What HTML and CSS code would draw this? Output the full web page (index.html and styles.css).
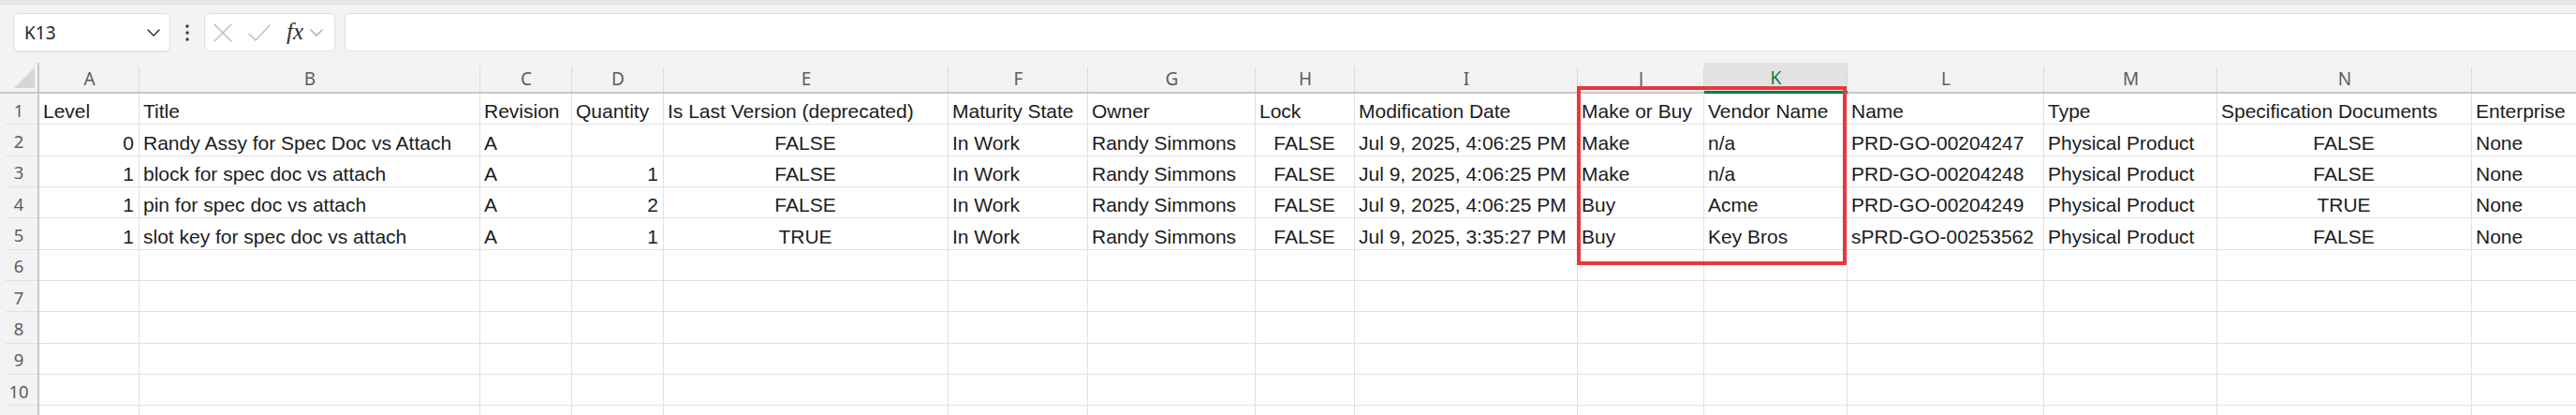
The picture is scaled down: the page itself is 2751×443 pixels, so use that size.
FILE: index.html
```html
<!DOCTYPE html>
<html lang="en">
<head>
<meta charset="utf-8">
<title>Sheet</title>
<link rel="stylesheet" href="styles.css">
</head>
<body>
<div class="ribbon-edge"></div>
<div class="toolbar">
  <div class="namebox">
    <span class="ref">K13</span>
    <svg class="chev" width="16" height="10" viewBox="0 0 16 10"><polyline points="2,2 8,8 14,2" fill="none" stroke="#3a3a3a" stroke-width="1.6" stroke-linecap="round" stroke-linejoin="round"/></svg>
  </div>
  <div class="dots">
    <svg width="6" height="20" viewBox="0 0 6 20"><circle cx="3" cy="3" r="1.7" fill="#3a3a3a"/><circle cx="3" cy="10" r="1.7" fill="#3a3a3a"/><circle cx="3" cy="17" r="1.7" fill="#3a3a3a"/></svg>
  </div>
  <div class="fxbox">
    <svg class="ic-x" width="20" height="20" viewBox="0 0 20 20"><path d="M1 1 L19 19 M19 1 L1 19" stroke="#c2c2c2" stroke-width="1.6" fill="none" stroke-linecap="round"/></svg>
    <svg class="ic-ok" width="24" height="20" viewBox="0 0 24 20"><polyline points="1,11 8,18 23,2" fill="none" stroke="#c2c2c2" stroke-width="1.6" stroke-linecap="round" stroke-linejoin="round"/></svg>
    <span class="fx">fx</span>
    <svg class="chev-sm" width="16" height="10" viewBox="0 0 16 10"><polyline points="2,2 8,8 14,2" fill="none" stroke="#a8a8a8" stroke-width="1.4" stroke-linecap="round" stroke-linejoin="round"/></svg>
  </div>
  <div class="formula"></div>
</div>

<div class="viewport">
<div class="sheet">
  <div class="corner"><svg width="22" height="22" viewBox="0 0 22 22"><polygon points="22,0 22,22 0,22" fill="#d6d6d6"/></svg></div>
  <div class="ch">A</div><div class="ch">B</div><div class="ch">C</div><div class="ch">D</div><div class="ch">E</div><div class="ch">F</div><div class="ch">G</div><div class="ch">H</div><div class="ch">I</div><div class="ch">J</div><div class="ch sel">K</div><div class="ch">L</div><div class="ch">M</div><div class="ch">N</div><div class="ch"></div>

  <div class="rh">1</div>
  <div class="c">Level</div><div class="c">Title</div><div class="c">Revision</div><div class="c">Quantity</div><div class="c">Is Last Version (deprecated)</div><div class="c">Maturity State</div><div class="c">Owner</div><div class="c">Lock</div><div class="c">Modification Date</div><div class="c">Make or Buy</div><div class="c">Vendor Name</div><div class="c">Name</div><div class="c">Type</div><div class="c">Specification Documents</div><div class="c">Enterprise</div>

  <div class="rh">2</div>
  <div class="c r">0</div><div class="c">Randy Assy for Spec Doc vs Attach</div><div class="c">A</div><div class="c r"></div><div class="c m">FALSE</div><div class="c">In Work</div><div class="c">Randy Simmons</div><div class="c m">FALSE</div><div class="c">Jul 9, 2025, 4:06:25 PM</div><div class="c">Make</div><div class="c">n/a</div><div class="c">PRD-GO-00204247</div><div class="c">Physical Product</div><div class="c m">FALSE</div><div class="c">None</div>

  <div class="rh">3</div>
  <div class="c r">1</div><div class="c">block for spec doc vs attach</div><div class="c">A</div><div class="c r">1</div><div class="c m">FALSE</div><div class="c">In Work</div><div class="c">Randy Simmons</div><div class="c m">FALSE</div><div class="c">Jul 9, 2025, 4:06:25 PM</div><div class="c">Make</div><div class="c">n/a</div><div class="c">PRD-GO-00204248</div><div class="c">Physical Product</div><div class="c m">FALSE</div><div class="c">None</div>

  <div class="rh">4</div>
  <div class="c r">1</div><div class="c">pin for spec doc vs attach</div><div class="c">A</div><div class="c r">2</div><div class="c m">FALSE</div><div class="c">In Work</div><div class="c">Randy Simmons</div><div class="c m">FALSE</div><div class="c">Jul 9, 2025, 4:06:25 PM</div><div class="c">Buy</div><div class="c">Acme</div><div class="c">PRD-GO-00204249</div><div class="c">Physical Product</div><div class="c m">TRUE</div><div class="c">None</div>

  <div class="rh">5</div>
  <div class="c r">1</div><div class="c">slot key for spec doc vs attach</div><div class="c">A</div><div class="c r">1</div><div class="c m">TRUE</div><div class="c">In Work</div><div class="c">Randy Simmons</div><div class="c m">FALSE</div><div class="c">Jul 9, 2025, 3:35:27 PM</div><div class="c">Buy</div><div class="c">Key Bros</div><div class="c">sPRD-GO-00253562</div><div class="c">Physical Product</div><div class="c m">FALSE</div><div class="c">None</div>

  <div class="rh">6</div>
  <div class="c"></div><div class="c"></div><div class="c"></div><div class="c"></div><div class="c"></div><div class="c"></div><div class="c"></div><div class="c"></div><div class="c"></div><div class="c"></div><div class="c"></div><div class="c"></div><div class="c"></div><div class="c"></div><div class="c"></div>

  <div class="rh">7</div>
  <div class="c"></div><div class="c"></div><div class="c"></div><div class="c"></div><div class="c"></div><div class="c"></div><div class="c"></div><div class="c"></div><div class="c"></div><div class="c"></div><div class="c"></div><div class="c"></div><div class="c"></div><div class="c"></div><div class="c"></div>

  <div class="rh">8</div>
  <div class="c"></div><div class="c"></div><div class="c"></div><div class="c"></div><div class="c"></div><div class="c"></div><div class="c"></div><div class="c"></div><div class="c"></div><div class="c"></div><div class="c"></div><div class="c"></div><div class="c"></div><div class="c"></div><div class="c"></div>

  <div class="rh">9</div>
  <div class="c"></div><div class="c"></div><div class="c"></div><div class="c"></div><div class="c"></div><div class="c"></div><div class="c"></div><div class="c"></div><div class="c"></div><div class="c"></div><div class="c"></div><div class="c"></div><div class="c"></div><div class="c"></div><div class="c"></div>

  <div class="rh">10</div>
  <div class="c"></div><div class="c"></div><div class="c"></div><div class="c"></div><div class="c"></div><div class="c"></div><div class="c"></div><div class="c"></div><div class="c"></div><div class="c"></div><div class="c"></div><div class="c"></div><div class="c"></div><div class="c"></div><div class="c"></div>

  <div class="rh"></div>
  <div class="c"></div><div class="c"></div><div class="c"></div><div class="c"></div><div class="c"></div><div class="c"></div><div class="c"></div><div class="c"></div><div class="c"></div><div class="c"></div><div class="c"></div><div class="c"></div><div class="c"></div><div class="c"></div><div class="c"></div>

  <div class="highlight"></div>
</div>
</div>
</body>
</html>
```

FILE: styles.css
```css
html, body {
  margin: 0;
  padding: 0;
}
body {
  width: 2751px;
  height: 443px;
  overflow: hidden;
  background: #f3f3f3;
  font-family: "Liberation Sans", Arial, sans-serif;
}

.ribbon-edge {
  height: 4px;
  background: #e8e8e8;
  border-bottom: 1px solid #dddddd;
}

.toolbar {
  display: flex;
  align-items: stretch;
  height: 41px;
  padding: 9px 0 12px 14px;
  overflow: hidden;
}

.namebox {
  width: 168px;
  flex: none;
  box-sizing: border-box;
  background: #ffffff;
  border: 1px solid #e0e0e0;
  border-radius: 6px;
  box-shadow: 0 1px 1px rgba(0,0,0,0.04);
  display: flex;
  align-items: center;
  padding: 0 9px 0 11px;
}
.ref {
  flex: 1;
  font-family: "Noto Sans", "Liberation Sans", sans-serif;
  font-size: 19px;
  color: #242424;
}
.chev {
  display: block;
}

.dots {
  width: 36px;
  flex: none;
  display: flex;
  align-items: center;
  justify-content: center;
}
.dots svg { display: block; }

.fxbox {
  width: 140px;
  flex: none;
  box-sizing: border-box;
  background: #ffffff;
  border: 1px solid #e0e0e0;
  border-radius: 6px;
  display: flex;
  align-items: center;
  padding: 0 0 0 9px;
}
.ic-x { display: block; margin-right: 17px; }
.ic-ok { display: block; margin-right: 17px; }
.fx {
  font-family: "Liberation Serif", "DejaVu Serif", serif;
  font-style: italic;
  font-size: 25px;
  color: #303030;
  margin-right: 6px;
  line-height: 1;
  position: relative;
  top: -1px;
}
.chev-sm { display: block; }

.formula {
  flex: 1;
  margin-left: 10px;
  margin-right: -8px;
  background: #ffffff;
  border: 1px solid #e0e0e0;
  border-radius: 6px;
}

.viewport {
  width: 2751px;
  height: 376px;
  overflow: hidden;
}

.sheet {
  position: relative;
  display: grid;
  grid-template-columns: 42px 107px 364px 98px 98px 304px 149px 179px 106px 238px 135px 153px 210px 185px 272px 300px;
  grid-template-rows: 33px repeat(11, 33.333px);
}

.corner {
  background: #f3f3f3;
  border-right: 2px solid #c8c8c8;
  border-bottom: 2px solid #c8c8c8;
  box-sizing: border-box;
  display: flex;
  align-items: flex-end;
  justify-content: flex-end;
  padding: 0 3px 4px 0;
}
.corner svg { display: block; }

.ch {
  background:
    linear-gradient(#dcdcdc, #dcdcdc) right bottom / 1px 27px no-repeat,
    #f3f3f3;
  border-bottom: 2px solid #c8c8c8;
  box-sizing: border-box;
  display: flex;
  align-items: center;
  justify-content: center;
  font-family: "Noto Sans", "Liberation Sans", sans-serif;
  font-size: 19px;
  color: #5c5c5c;
  padding-top: 2px;
}
.ch.sel {
  background:
    linear-gradient(#d2d2d2, #d2d2d2) right bottom / 1px 27px no-repeat,
    #e2e2e2;
  color: #0f7b3f;
  border-bottom: 3px solid #107c41;
}

.rh {
  background:
    linear-gradient(#e0e0e0, #e0e0e0) right bottom / 34px 1px no-repeat,
    #f3f3f3;
  border-right: 2px solid #c8c8c8;
  box-sizing: border-box;
  display: flex;
  align-items: center;
  justify-content: center;
  font-family: "Noto Sans", "Liberation Sans", sans-serif;
  font-size: 18.5px;
  color: #5c5c5c;
  padding-top: 1px;
}

.c {
  background: #ffffff;
  border-right: 1px solid #e1e1e1;
  border-bottom: 1px solid #e1e1e1;
  box-sizing: border-box;
  display: flex;
  align-items: flex-end;
  padding: 0 5px 3px 4px;
  font-size: 21px;
  line-height: 21px;
  color: #1c1c1c;
  white-space: nowrap;
  overflow: hidden;
}
.c.r { justify-content: flex-end; }
.c.m { justify-content: center; }

.highlight {
  position: absolute;
  left: 1684px;
  top: 25px;
  width: 288px;
  height: 191px;
  box-sizing: border-box;
  border: 4px solid #e8373e;
  pointer-events: none;
}
```
